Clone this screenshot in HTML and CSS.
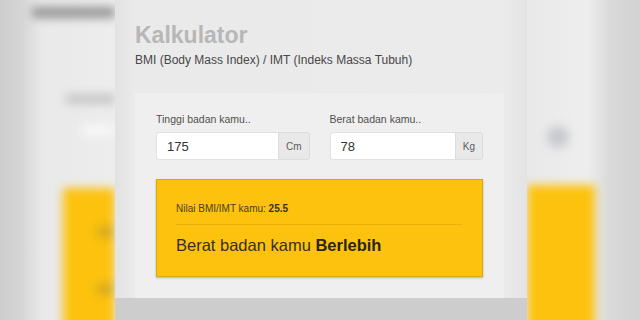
FILE: index.html
```html
<!DOCTYPE html>
<html lang="id">
<head>
    <meta charset="UTF-8">
    <meta name="viewport" content="width=device-width, initial-scale=1.0">
    <title>Kalkulator BMI</title>
    <link rel="stylesheet" href="styles.css">
</head>
<body>
    <div class="side side-left">
        <div class="blur">
            <div class="bl-head"></div>
            <div class="bl-label"></div>
            <div class="bl-input"></div>
            <div class="bl-yellow">
                <div class="bl-spot"></div>
                <div class="bl-spot"></div>
            </div>
        </div>
    </div>

    <main class="panel">
        <div class="panel-main">
            <h1 class="judul">Kalkulator</h1>
            <p class="subjudul">BMI (Body Mass Index) / IMT (Indeks Massa Tubuh)</p>

            <section class="kartu">
                <div class="baris">
                    <div class="grup">
                        <label class="label">Tinggi badan kamu..</label>
                        <div class="input-grup">
                            <input class="input" type="text" value="175">
                            <span class="satuan">Cm</span>
                        </div>
                    </div>
                    <div class="grup">
                        <label class="label">Berat badan kamu..</label>
                        <div class="input-grup">
                            <input class="input" type="text" value="78">
                            <span class="satuan">Kg</span>
                        </div>
                    </div>
                </div>

                <div class="hasil">
                    <p class="nilai">Nilai BMI/IMT kamu: <b>25.5</b></p>
                    <hr class="garis">
                    <p class="status">Berat badan kamu <b>Berlebih</b></p>
                </div>
            </section>
        </div>
        <div class="panel-foot"></div>
    </main>

    <div class="side side-right">
        <div class="blur">
            <div class="br-dot"></div>
            <div class="br-yellow"></div>
        </div>
    </div>
</body>
</html>
```

FILE: styles.css
```css
body {
    margin: 0;
    padding: 0;
    width: 640px;
    height: 320px;
    overflow: hidden;
    display: flex;
    font-family: "Liberation Sans", Arial, sans-serif;
    background: #e4e4e4;
}

/* Latar samping yang diburamkan */
.side {
    height: 320px;
    overflow: hidden;
}
.side-left {
    width: 115px;
    background: linear-gradient(to right, #cdcdcd 0, #d6d6d6 22px, #e9e9e9 42px, #ededed 100%);
}
.side-right {
    width: 113px;
    background: linear-gradient(to right, #e9e9e9 0, #eeeeee 60px, #dadada 82px, #d2d2d2 100%);
}
.blur {
    height: 340px;
    display: flex;
    flex-direction: column;
    filter: blur(5px);
}
.bl-head {
    height: 12px;
    margin: 7px 0 0 32px;
    background: #959595;
}
.bl-label {
    height: 10px;
    margin: 76px 0 0 66px;
    background: #c6c6c6;
}
.bl-input {
    height: 12px;
    margin: 21px 0 0 82px;
    background: #f7f7f7;
}
.bl-yellow {
    flex: 1;
    margin: 52px 0 0 63px;
    padding: 38px 0 0 34px;
    background: #fcc20e;
}
.bl-spot {
    height: 12px;
    margin-bottom: 45px;
    background: #d9ab1c;
}
.br-dot {
    width: 22px;
    height: 22px;
    border-radius: 50%;
    margin: 126px 0 0 20px;
    background: #c8c9ce;
}
.br-yellow {
    flex: 1;
    width: 68px;
    margin-top: 37px;
    background: #fcc20e;
}

/* Panel tengah */
.panel {
    width: 412px;
    height: 320px;
    display: flex;
    flex-direction: column;
}
.panel-main {
    padding: 21px 23px 0 20px;
    background: linear-gradient(to right, #e2e2e2 0, #eaeaea 18px, #ebebeb 390px, #e3e3e3 100%);
}
.panel-foot {
    flex: 1;
    background: #cdcdcd;
}
.judul {
    margin: 0;
    font-size: 23px;
    line-height: 28px;
    font-weight: bold;
    color: #b7b7b7;
}
.subjudul {
    margin: 3px 0 0;
    font-size: 12px;
    line-height: 16px;
    color: #474747;
}
.kartu {
    margin-top: 25px;
    padding: 20px 21px 21px;
    background: #efefef;
}
.baris {
    display: grid;
    grid-template-columns: minmax(0, 1fr) minmax(0, 1fr);
    column-gap: 20px;
}
.grup {
    min-width: 0;
}
.label {
    display: block;
    font-size: 10.5px;
    line-height: 13px;
    color: #4f4f4f;
    margin-bottom: 6px;
}
.input-grup {
    display: flex;
    height: 28px;
}
.input {
    flex: 1;
    width: 0;
    min-width: 0;
    margin: 0;
    padding: 0 10px;
    border: 1px solid #e2e2e2;
    border-right: none;
    border-radius: 3px 0 0 3px;
    background: #ffffff;
    font-family: inherit;
    font-size: 13px;
    color: #333333;
    outline: none;
}
.satuan {
    display: flex;
    align-items: center;
    padding: 0 7px;
    border: 1px solid #dcdcdc;
    border-radius: 0 3px 3px 0;
    background: #e9e9e9;
    font-size: 10px;
    color: #5c5c5c;
}
.hasil {
    margin-top: 19px;
    height: 98px;
    box-sizing: border-box;
    padding: 23px 20px 0 19px;
    background: #fdc20e;
    border: 1px solid #dca70f;
    box-shadow: 0 1px 2px rgba(0, 0, 0, 0.25);
}
.nilai {
    margin: 0;
    font-size: 10px;
    line-height: 12px;
    color: #4a3f1c;
}
.nilai b {
    color: #3a311a;
}
.garis {
    margin: 9px 0 0;
    border: none;
    border-top: 1px solid #ebb10b;
}
.status {
    margin: 10px 0 0;
    font-size: 16.5px;
    line-height: 20px;
    color: #35301f;
}
.status b {
    color: #2a2514;
}
```
